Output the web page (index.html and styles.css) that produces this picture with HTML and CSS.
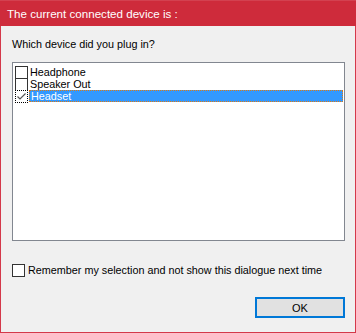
FILE: index.html
```html
<!DOCTYPE html>
<html lang="en">
  <head>
    <meta charset="UTF-8" />
    <title>Device</title>
    <link rel="stylesheet" href="styles.css">
  </head>
  <body>
    <div class="window">
      <div class="titlebar">The current connected device is :</div>
      <div class="content">
        <p class="prompt">Which device did you plug in?</p>
        <div class="listbox">
          <div class="list-item">
            <span class="check"></span>
            <span class="label">Headphone</span>
          </div>
          <div class="list-item">
            <span class="check"></span>
            <span class="label">Speaker Out</span>
          </div>
          <div class="list-item selected">
            <span class="check checked focus">
              <svg width="11" height="11" viewBox="0 0 11 11">
                <path d="M1.5 5.5 L4 8 L9.5 2.5" fill="none" stroke="#555" stroke-width="1.2" />
              </svg>
            </span>
            <span class="label">Headset</span>
          </div>
        </div>
        <label class="remember">
          <span class="check big"></span>
          <span>Remember my selection and not show this dialogue next time</span>
        </label>
        <div class="actions">
          <button class="btn-ok">OK</button>
        </div>
      </div>
    </div>
  </body>
</html>
```

FILE: styles.css
```css
* {
  margin: 0;
  padding: 0;
  box-sizing: border-box;
}

body {
  background-color: #f0f0f0;
  font-family: "Liberation Sans", Arial, sans-serif;
  font-size: 10.8px;
  color: #000;
}

.window {
  width: 356px;
  height: 333px;
  display: flex;
  flex-direction: column;
  border: 1px solid #d4394a;
  border-top: none;
  background-color: #f0f0f0;
}

.titlebar {
  height: 26px;
  margin: 0 -1px;
  padding-left: 7px;
  line-height: 25px;
  background-color: #ce2b3b;
  border-top: 1px solid #d34150;
  color: #fff;
  font-size: 11.6px;
}

.content {
  flex: 1;
  display: flex;
  flex-direction: column;
  padding: 0 10px 0 11px;
}

.prompt {
  margin-top: 11px;
  height: 14px;
  line-height: 14px;
  color: #000;
}

.listbox {
  margin-top: 11px;
  height: 179px;
  border: 1px solid #828790;
  background-color: #fff;
  padding: 3px 1px 0 2px;
}

.list-item {
  display: flex;
  align-items: center;
  height: 12px;
}

.list-item .check {
  margin-bottom: -1px;
}

.check {
  width: 13px;
  height: 13px;
  flex: none;
  border: 1px solid #333;
  background-color: #fff;
  display: flex;
  align-items: center;
  justify-content: center;
}

.check.focus {
  border: 1px dotted #000;
}

.label {
  flex: 1;
  height: 12px;
  line-height: 12px;
  margin-left: 1px;
  padding-left: 1px;
}

.selected .label {
  background-color: #3399ff;
  color: #fff;
  border: 1px dotted #e07a10;
  line-height: 10px;
}

.remember {
  margin-top: 22px;
  display: flex;
  align-items: center;
  gap: 3px;
  height: 14px;
}

.actions {
  margin-top: auto;
  margin-bottom: 14px;
  display: flex;
  justify-content: flex-end;
}

.btn-ok {
  width: 90px;
  height: 21px;
  border: 2px solid #0078d7;
  background-color: #e1e1e1;
  font-family: "Liberation Sans", Arial, sans-serif;
  font-size: 11px;
  color: #000;
}
```
